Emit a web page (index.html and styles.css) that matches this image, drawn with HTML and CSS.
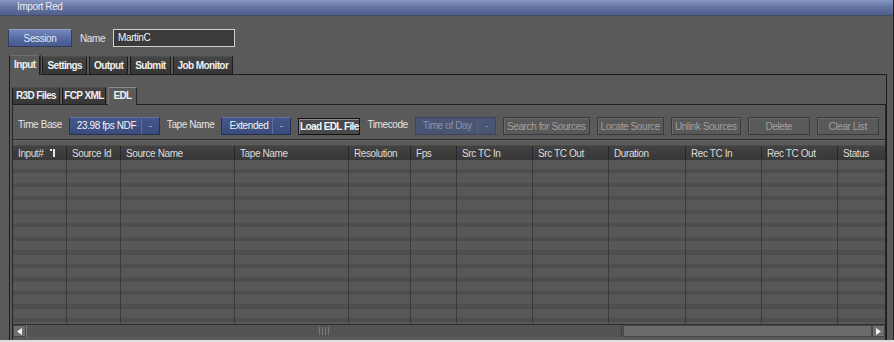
FILE: index.html
```html
<!DOCTYPE html>
<html>
<head>
<meta charset="utf-8">
<title>Import Red</title>
<link rel="stylesheet" href="styles.css">
</head>
<body>
<div class="app">
  <div class="titlebar">Import Red</div>
  <div class="session-row">
    <button class="btn-blue">Session</button>
    <span class="label name-label">Name</span>
    <div class="textfield">MartinC</div>
  </div>
  <div class="tabs">
    <div class="tab active">Input</div>
    <div class="tab">Settings</div>
    <div class="tab">Output</div>
    <div class="tab">Submit</div>
    <div class="tab">Job Monitor</div>
  </div>
  <div class="panel">
    <div class="subtabs">
      <div class="subtab w-r3d">R3D Files</div>
      <div class="subtab w-fcp">FCP XML</div>
      <div class="subtab active w-edl">EDL</div>
    </div>
    <div class="subpanel">
      <div class="toolbar">
        <span class="label tb-label">Time Base</span>
        <div class="dropdown w-dd1"><span class="dd-value">23.98 fps NDF</span><span class="dd-arrow"></span></div>
        <span class="label tb-label">Tape Name</span>
        <div class="dropdown w-dd2"><span class="dd-value">Extended</span><span class="dd-arrow"></span></div>
        <button class="btn-dark w-load">Load EDL File</button>
        <span class="label tb-label">Timecode</span>
        <div class="dropdown disabled w-tod"><span class="dd-value">Time of Day</span><span class="dd-arrow"></span></div>
        <button class="btn-off w-search">Search for Sources</button>
        <button class="btn-off w-locate">Locate Source</button>
        <button class="btn-off w-unlink">Unlink Sources</button>
        <button class="btn-off w-delete">Delete</button>
        <button class="btn-off w-clear">Clear List</button>
      </div>
      <div class="table">
        <div class="thead cols">
          <div class="th">Input#<svg class="sort-icon" width="6" height="8" viewBox="0 0 6 8"><rect x="0" y="0" width="2" height="2" fill="#e6e6e6"/><rect x="3" y="0" width="2" height="8" fill="#e6e6e6"/></svg></div>
          <div class="th">Source Id</div>
          <div class="th">Source Name</div>
          <div class="th">Tape Name</div>
          <div class="th">Resolution</div>
          <div class="th">Fps</div>
          <div class="th">Src TC In</div>
          <div class="th">Src TC Out</div>
          <div class="th">Duration</div>
          <div class="th">Rec TC In</div>
          <div class="th">Rec TC Out</div>
          <div class="th">Status</div>
        </div>
        <div class="tbody cols">
          <div class="td"></div><div class="td"></div><div class="td"></div><div class="td"></div>
          <div class="td"></div><div class="td"></div><div class="td"></div><div class="td"></div>
          <div class="td"></div><div class="td"></div><div class="td"></div><div class="td"></div>
        </div>
        <div class="hscroll">
          <div class="sb-arrow"><svg width="6" height="7" viewBox="0 0 6 7"><polygon points="5,0 5,7 0,3.5" fill="#f2f2f2"/></svg></div>
          <div class="sb-thumb"><span class="grip"></span></div>
          <div class="sb-track"></div>
          <div class="sb-arrow"><svg width="6" height="7" viewBox="0 0 6 7"><polygon points="0,0 0,7 5,3.5" fill="#f2f2f2"/></svg></div>
        </div>
      </div>
    </div>
  </div>
</div>
<div class="bottom-strip"></div>
</body>
</html>
```
FILE: styles.css
```css
* { box-sizing: border-box; }
html, body { margin: 0; padding: 0; }
body {
  width: 894px;
  height: 342px;
  overflow: hidden;
  background: #dedede;
  font-family: "Liberation Sans", Arial, sans-serif;
  font-size: 10px;
  letter-spacing: -0.4px;
  color: #e2e2e2;
  white-space: nowrap;
}
.app {
  width: 894px;
  height: 340px;
  background: #5a5a5a;
  border-right: 1px solid #262626;
  display: flex;
  flex-direction: column;
}
.titlebar {
  height: 16px;
  flex: none;
  padding-left: 17px;
  line-height: 14px;
  color: #ececec;
  background: linear-gradient(#8797c2, #6676a4 45%, #4f5e8b);
  border-bottom: 1px solid #454e66;
}
.session-row {
  flex: none;
  display: flex;
  align-items: center;
  height: 18px;
  margin-top: 13px;
  padding-left: 8px;
}
button {
  font-family: inherit;
  font-size: 10px;
  letter-spacing: inherit;
  margin: 0;
  padding: 0;
  cursor: default;
  white-space: nowrap;
}
.btn-blue {
  width: 64px;
  height: 18px;
  color: #e4e6ee;
  background: linear-gradient(#7588bc, #556aa1 55%, #465a8f);
  border: 1px solid #323d5e;
  border-top-color: #8c9bc8;
}
.label { color: #e4e4e4; }
.name-label { margin-left: 8px; }
.textfield {
  margin-left: 8px;
  width: 122px;
  height: 18px;
  background: #3b3b3b;
  border: 1px solid #d0d0d0;
  padding-left: 4px;
  line-height: 16px;
  color: #f2f2f2;
}
.tabs {
  flex: none;
  display: flex;
  align-items: flex-end;
  gap: 2px;
  height: 19px;
  margin-top: 8px;
  padding-left: 9px;
}
.tab {
  height: 18px;
  padding: 0 4px;
  line-height: 17px;
  font-weight: bold;
  letter-spacing: -0.6px;
  color: #f0f0f0;
  background: linear-gradient(#454545, #363636);
  border: 1px solid #1c1c1c;
  border-bottom: none;
  border-top-color: #4e4e4e;
}
.tab.active {
  position: relative;
  z-index: 1;
  height: 20px;
  margin-bottom: -1px;
  background: #5a5a5a;
  border-color: #202020;
  border-top-color: #6e6e6e;
  box-shadow: 1px 0 0 #303030;
}
.panel {
  flex: 1;
  display: flex;
  flex-direction: column;
  margin: 0 6px 0 9px;
  border: 1px solid #1c1c1c;
  border-bottom: none;
  padding: 12px 0 0 2px;
}
.subtabs {
  flex: none;
  display: flex;
  align-items: flex-end;
  gap: 2px;
  height: 17px;
}
.subtab {
  height: 17px;
  text-align: center;
  line-height: 16px;
  font-weight: bold;
  letter-spacing: -0.6px;
  color: #f0f0f0;
  background: linear-gradient(#454545, #363636);
  border: 1px solid #1c1c1c;
  border-bottom: none;
  border-top-color: #4e4e4e;
}
.subtab.active {
  position: relative;
  z-index: 1;
  height: 18px;
  margin-bottom: -1px;
  background: #5a5a5a;
  border-color: #2a2a2a;
  border-top-color: #8a8a8a;
  border-left-color: #7a7a7a;
}
.w-r3d { width: 48px; }
.w-fcp { width: 44px; }
.w-edl { width: 29px; }
.subpanel {
  flex: 1;
  display: flex;
  flex-direction: column;
  border: 1px solid #262626;
  border-bottom: none;
  border-top-color: #1e1e1e;
}
.toolbar {
  flex: none;
  display: flex;
  align-items: center;
  gap: 7px;
  height: 35px;
  padding: 12px 0 4px 5px;
  border-bottom: 1px solid #2c2c2c;
  box-shadow: 0 1px 0 #676767;
}
.tb-label { padding-bottom: 3px; }
.dropdown {
  display: flex;
  height: 18px;
  background: linear-gradient(#44578a, #3a4c7e);
  border: 1px solid #27314f;
  border-top-color: #6173a3;
  color: #f4f4f4;
}
.dd-value {
  flex: 1;
  padding-left: 7px;
  line-height: 16px;
  overflow: hidden;
}
.dd-arrow {
  width: 18px;
  flex: none;
  border-left: 1px solid #5d6e9c;
  display: flex;
  align-items: center;
  justify-content: center;
}
.dd-arrow::after {
  content: "";
  width: 3px;
  height: 1px;
  background: #8d9bc2;
}
.dropdown.disabled {
  background: #4a5473;
  border-color: #3d455e;
  color: #8b93ad;
}
.dropdown.disabled .dd-arrow { border-left-color: #58627f; }
.dropdown.disabled .dd-arrow::after { background: #737c98; }
.w-dd1 { width: 91px; }
.w-dd2 { width: 70px; }
.w-tod { width: 81px; }
.btn-dark {
  height: 17px;
  color: #f6f6f6;
  font-weight: bold;
  letter-spacing: -0.6px;
  background: #484848;
  border: 1px solid #121212;
  box-shadow: inset 1px 1px 0 #8a8a8a;
}
.w-load { width: 62px; }
.btn-off {
  height: 18px;
  color: #a0a0a0;
  background: #595959;
  border: 1px solid #3a3a3a;
  box-shadow: inset 1px 1px 0 #6a6a6a;
}
.w-search { width: 87px; }
.w-locate { width: 67px; }
.w-unlink { width: 70px; }
.w-delete { width: 62px; }
.w-clear { width: 62px; }
.table {
  flex: 1;
  display: flex;
  flex-direction: column;
  margin-top: 5px;
}
.cols {
  display: grid;
  grid-template-columns: 54px 54px 114px 114px 62px 46px 76px 76px 77px 76px 76px 1fr;
}
.thead {
  flex: none;
  height: 15px;
  background: linear-gradient(#424242, #383838);
  border-top: 1px solid #4c4c4c;
}
.th {
  display: flex;
  align-items: center;
  padding-left: 5px;
  color: #dcdcdc;
  border-right: 1px solid #262626;
  line-height: 13px;
  overflow: hidden;
}
.th:last-child { border-right: none; }
.sort-icon { margin-left: 7px; flex: none; }
.tbody {
  flex: 1;
  background: repeating-linear-gradient(#585858 0, #575757 9px, #4e4e4e 9.5px, #4d4d4d 13.5px);
  border-bottom: 1px solid #2e2e2e;
}
.td { border-right: 1px solid #3a3a3a; }
.td:last-child { border-right: none; }
.hscroll {
  flex: none;
  display: flex;
  height: 12px;
  margin-bottom: 3px;
  background: #555;
}
.sb-arrow {
  width: 13px;
  display: flex;
  align-items: center;
  justify-content: center;
  background: #6f6f6f;
  border: 1px solid #474747;
}
.sb-thumb {
  width: 596px;
  display: flex;
  align-items: center;
  justify-content: center;
  background: #545454;
  border-left: 1px solid #7a7a7a;
  border-right: 1px solid #3f3f3f;
}
.grip {
  width: 11px;
  height: 8px;
  background: repeating-linear-gradient(90deg, #7a7a7a 0 1px, transparent 1px 3px);
}
.sb-track {
  flex: 1;
  margin-left: 1px;
  background: #6b6b6b;
  border: 1px solid #474747;
}
.bottom-strip {
  height: 2px;
  background: #dedede;
}
```
